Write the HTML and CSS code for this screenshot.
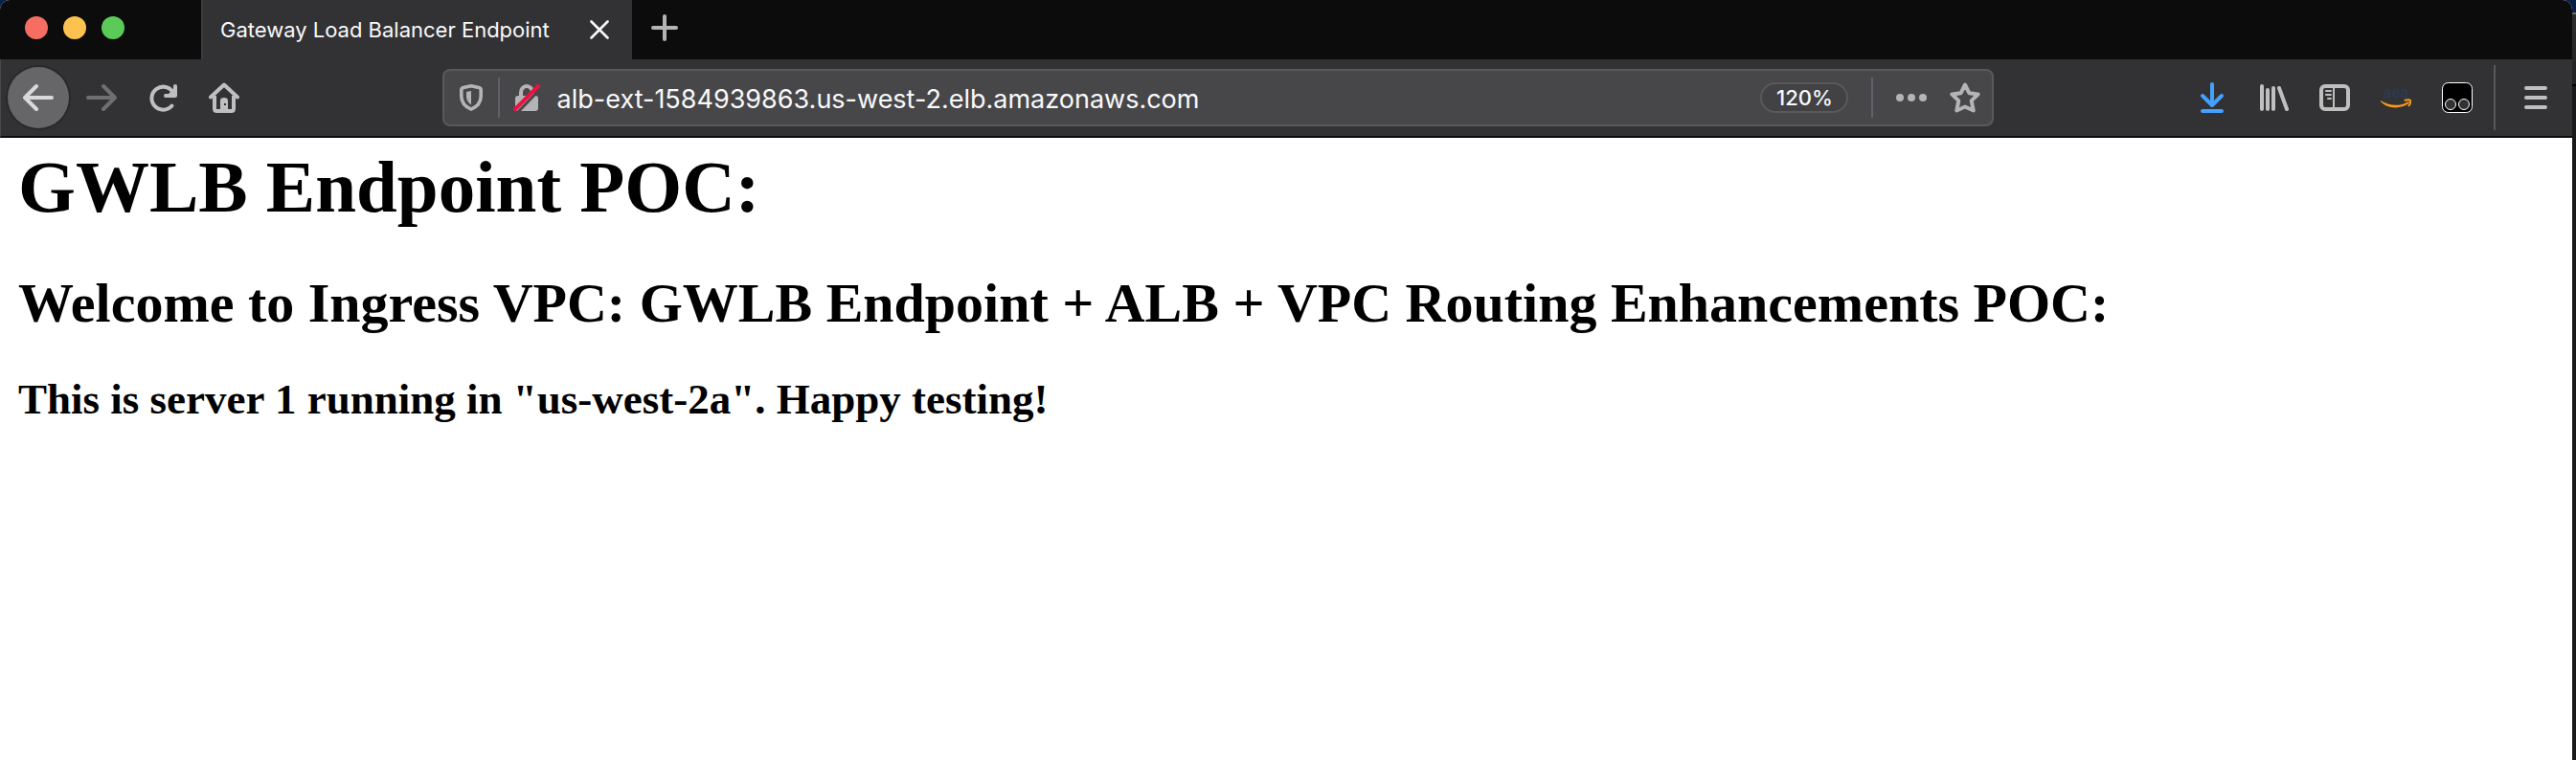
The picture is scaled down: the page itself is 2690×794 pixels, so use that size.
FILE: index.html
```html
<!DOCTYPE html>
<html lang="en">
<head>
<meta charset="utf-8">
<title>Gateway Load Balancer Endpoint</title>
<link rel="stylesheet" href="styles.css">
</head>
<body>
<div class="window">
  <header class="titlebar">
    <div class="lights">
      <button class="light close" aria-label="Close window"></button>
      <button class="light minimize" aria-label="Minimize window"></button>
      <button class="light maximize" aria-label="Zoom window"></button>
    </div>
    <div class="tab">
      <span class="tab-title">Gateway Load Balancer Endpoint</span>
      <button class="tab-close" aria-label="Close tab">
        <svg width="20" height="20" viewBox="0 0 20 20"><path d="M1.500 1.500l17 17M18.500 1.500l-17 17" stroke="#f9f9fa" stroke-width="2.600" stroke-linecap="round"/></svg>
      </button>
    </div>
    <button class="new-tab" aria-label="New tab">
      <svg width="28" height="28" viewBox="0 0 28 28"><path d="M14 2v24M2 14h24" stroke="#b4b4b6" stroke-width="4" stroke-linecap="round"/></svg>
    </button>
  </header>

  <nav class="toolbar" aria-label="Navigation">
    <button class="tool back" aria-label="Back">
      <svg class="icon" viewBox="0 0 32 32"><path d="M30 16H3M14 4L2 16l12 12" stroke="#d9d9da" stroke-width="4" stroke-linecap="round" stroke-linejoin="round" fill="none"/></svg>
    </button>
    <button class="tool" aria-label="Forward">
      <svg class="icon" viewBox="0 0 32 32"><path d="M2 16h27M18 4l12 12-12 12" stroke="#6f6f71" stroke-width="4" stroke-linecap="round" stroke-linejoin="round" fill="none"/></svg>
    </button>
    <button class="tool" aria-label="Reload">
      <svg class="icon" viewBox="0 0 32 32"><path d="M25.500 24.500A12 12 0 1 1 27 11" stroke="#bfbfc0" stroke-width="4" stroke-linecap="round" fill="none"/><path d="M29 4v10H19" stroke="#bfbfc0" stroke-width="4" stroke-linecap="round" stroke-linejoin="round" fill="none"/><path d="M29 5v9H20z" fill="#bfbfc0"/></svg>
    </button>
    <button class="tool" aria-label="Home">
      <svg class="icon" viewBox="0 0 32 32"><path d="M2 15.500L16 2.500l14 13" stroke="#bfbfc0" stroke-width="4" stroke-linecap="round" stroke-linejoin="round" fill="none"/><path d="M6 14v13.500q0 2.500 2.500 2.500h15q2.500 0 2.500-2.500V14" stroke="#bfbfc0" stroke-width="4" fill="none"/><path d="M12 30V19q0-3 4-3t4 3v11z" fill="#bfbfc0"/><rect x="16" y="22" width="2" height="2" fill="#323234"/></svg>
    </button>

    <div class="space"></div>

    <div class="urlbar">
      <button class="in-url" aria-label="Tracking protection">
        <svg width="24" height="28" viewBox="0 0 24 28"><path d="M12 1.800L20 3.500Q22.200 4 22.200 6v6.500C22.200 19.500 17 24 12 26.200 7 24 1.800 19.500 1.800 12.500V6Q1.800 4 4 3.500z" stroke="#b4b4b6" stroke-width="3.600" stroke-linejoin="round" fill="none"/><path d="M12 7v14.500C9 19.500 7 16.500 7 12.500V8z" fill="#b4b4b6"/></svg>
      </button>
      <span class="divider"></span>
      <button class="in-url" aria-label="Connection is not secure">
        <svg width="28" height="28" viewBox="0 0 28 28"><path d="M8 13V8.500a6 6.500 0 0 1 12 0V13" stroke="#b4b4b6" stroke-width="4" fill="none"/><rect x="2" y="12" width="24" height="16" rx="3" fill="#b4b4b6"/><path d="M5 29L28 5" stroke="#474749" stroke-width="3"/><path d="M2 26L26 2" stroke="#ef0f43" stroke-width="4" stroke-linecap="round"/></svg>
      </button>
      <input class="address" type="text" aria-label="Address" value="alb-ext-1584939863.us-west-2.elb.amazonaws.com">
      <button class="zoom">120%</button>
      <span class="divider"></span>
      <button class="in-url dots" aria-label="Page actions">
        <svg width="32" height="8" viewBox="0 0 32 8" fill="#b4b4b6"><circle cx="4" cy="4" r="4"/><circle cx="16" cy="4" r="4"/><circle cx="28" cy="4" r="4"/></svg>
      </button>
      <button class="in-url star" aria-label="Bookmark this page">
        <svg class="icon" viewBox="0 0 32 32"><path d="M16 2.500l4.300 8.700 9.300 1.300-6.900 6.600 2 10.400L16 25.500l-8.700 4 2-10.400-6.900-6.600 9.300-1.300z" stroke="#b4b4b6" stroke-width="4" stroke-linejoin="round" fill="none"/></svg>
      </button>
    </div>

    <div class="space"></div>

    <button class="tool" aria-label="Downloads">
      <svg class="icon" viewBox="0 0 32 32"><path d="M16 2v22M6 14l10 10 10-10M6 30h20" stroke="#45a1ff" stroke-width="4" stroke-linecap="round" stroke-linejoin="round" fill="none"/></svg>
    </button>
    <button class="tool" aria-label="Library">
      <svg class="icon" viewBox="0 0 32 32"><path d="M4 4v24M10 8v20M16 6v22M22 6l8 22" stroke="#bfbfc0" stroke-width="4" stroke-linecap="round" fill="none"/></svg>
    </button>
    <button class="tool" aria-label="Sidebars">
      <svg class="icon" viewBox="0 0 32 32"><rect x="2" y="4" width="28" height="24" rx="4" stroke="#bfbfc0" stroke-width="4" fill="none"/><path d="M15 4v24" stroke="#bfbfc0" stroke-width="2"/><path d="M7 9h5M7 13h5M9 17h3" stroke="#bfbfc0" stroke-width="2" stroke-linecap="round"/></svg>
    </button>
    <button class="tool" aria-label="AEA">
      <svg class="icon" viewBox="0 0 32 32"><text class="aea" x="16" y="16" text-anchor="middle">aea</text><path d="M0 19C8 24.500 20 26 29 20l.8 1.500C21 28.500 7 28 0 20z" fill="#f79a1c"/><path d="M25.500 18.800q4-1 5.500 0 .500 3-1.500 5.500" stroke="#f79a1c" stroke-width="2" fill="none" stroke-linecap="round"/></svg>
    </button>
    <button class="tool" aria-label="Tampermonkey">
      <svg class="icon" viewBox="0 0 32 32"><rect x=".5" y=".5" width="31" height="31" rx="6" fill="#000" stroke="#fff"/><circle cx="9" cy="23" r="5.500" fill="#323234" stroke="#fff"/><circle cx="23" cy="23" r="5.500" fill="#323234" stroke="#fff"/></svg>
    </button>
    <span class="separator"></span>
    <button class="tool" aria-label="Menu">
      <svg class="icon" viewBox="0 0 32 32"><path d="M6 6h20M6 16h20M6 26h20" stroke="#bfbfc0" stroke-width="4" stroke-linecap="round"/></svg>
    </button>
  </nav>

  <main class="page">
    <h1>GWLB Endpoint POC:</h1>
    <h2>Welcome to Ingress VPC: GWLB Endpoint + ALB + VPC Routing Enhancements POC:</h2>
    <h3>This is server 1 running in "us-west-2a". Happy testing!</h3>
  </main>
</div>
</body>
</html>
```
FILE: styles.css
```css
* { box-sizing: border-box; }

body {
  margin: 0;
  padding-right: 4px;
  min-height: 100vh;
  display: flex;
  background: linear-gradient(#0a1f45 13px, #6a6a6c 13px, #6a6a6c 15px, #2c2c2c 15px, #222 88px, #000 88px, #000 90px, #191919 90px);
  font-family: Inter, "Liberation Sans", sans-serif;
}

button {
  margin: 0;
  padding: 0;
  border: 0;
  background: none;
  font: inherit;
  display: flex;
  align-items: center;
  justify-content: center;
  flex: none;
}

svg { display: block; }

.window {
  flex: 1;
  min-width: 0;
  display: flex;
  flex-direction: column;
  border-radius: 10px 10px 0 0;
  overflow: hidden;
  background: #fff;
}

.titlebar {
  display: flex;
  height: 62px;
  background: #0c0c0d;
}

.lights {
  display: flex;
  align-items: center;
  gap: 16px;
  width: 210px;
  padding: 0 0 4px 26px;
}

.light {
  width: 24px;
  height: 24px;
  border-radius: 50%;
}
.close { background: #f66d62; }
.minimize { background: #fbc250; }
.maximize { background: #5bca56; }

.tab {
  display: flex;
  align-items: center;
  justify-content: space-between;
  width: 450px;
  padding: 0 24px 0 18px;
  border-left: 2px solid #3c3c3e;
  background: #323234;
  color: #f9f9fa;
  font-size: 22px;
}

.tab-close { width: 20px; height: 62px; }

.new-tab { width: 68px; height: 58px; }

.toolbar {
  display: flex;
  align-items: center;
  height: 82px;
  padding: 0 6px 0 7px;
  background: #323234;
  border-left: 1px solid #48484a;
  border-bottom: 2px solid #0c0c0d;
}

.tool { width: 64px; height: 64px; }
.icon { width: 32px; height: 32px; }

.back {
  margin-right: 2px;
  border-radius: 50%;
  background: #666668;
  box-shadow: 0 0 0 2px #29292b;
}

.space { flex: 49 1 0; }

.urlbar {
  flex: 405 1 0;
  display: flex;
  align-items: center;
  min-width: 0;
  height: 60px;
  border: 2px solid #59595b;
  border-radius: 8px;
  background: #474749;
}

.in-url { width: 56px; height: 56px; }

.divider {
  flex: none;
  width: 2px;
  height: 42px;
  background: #606069;
}

.address {
  flex: 1;
  min-width: 0;
  height: 56px;
  margin: 0;
  padding: 2px 0 0 4px;
  border: 0;
  outline: 0;
  background: none;
  color: #f9f9fa;
  font: 27px Inter, "Liberation Sans", sans-serif;
}

.zoom {
  width: 92px;
  height: 32px;
  margin-right: 24px;
  border: 2px solid #59595b;
  border-radius: 16px;
  background: #424244;
  color: #f9f9fa;
  font-size: 22px;
  font-weight: 500;
}

.dots { width: 80px; }
.star { width: 32px; margin-right: 12px; }

.aea {
  font: 700 15px Inter, "Liberation Sans", sans-serif;
  fill: #2b3a50;
}

.separator {
  flex: none;
  width: 2px;
  height: 68px;
  margin: 0 10px 0 6px;
  background: #58585a;
}

.page {
  flex: 1;
  padding: 5px 19px;
  color: #000;
  font-family: "Liberation Serif", serif;
}

h1, h2, h3 { margin: 0; }
h1 { font-size: 77px; line-height: 92px; }
h2 { margin-top: 42px; font-size: 58px; line-height: 68px; }
h3 { margin-top: 40px; font-size: 45px; line-height: 52px; }
```
